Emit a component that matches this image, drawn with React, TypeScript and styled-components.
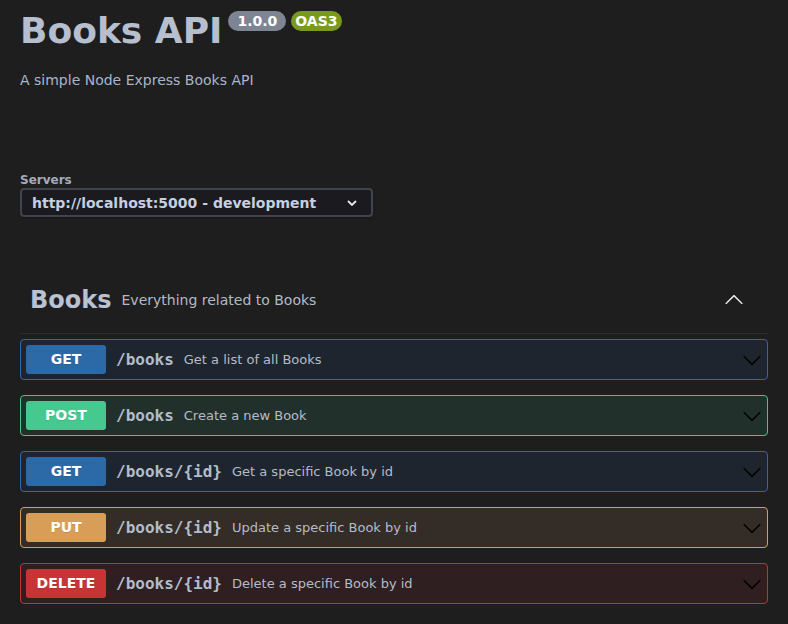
import React from 'react';
import styled, { createGlobalStyle } from 'styled-components';

type Method = 'GET' | 'POST' | 'PUT' | 'DELETE';

const palette: Record<Method, { badge: string; border: string; bg: string }> = {
  GET: { badge: '#2b69a7', border: '#2a6aab', bg: '#1f252e' },
  POST: { badge: '#45c98f', border: '#43c58a', bg: '#22302b' },
  PUT: { badge: '#d89e58', border: '#d49f5a', bg: '#342c26' },
  DELETE: { badge: '#c83336', border: '#bf3235', bg: '#2f1f20' },
};

const ops: { method: Method; path: string; summary: string }[] = [
  { method: 'GET', path: '/books', summary: 'Get a list of all Books' },
  { method: 'POST', path: '/books', summary: 'Create a new Book' },
  { method: 'GET', path: '/books/{id}', summary: 'Get a specific Book by id' },
  { method: 'PUT', path: '/books/{id}', summary: 'Update a specific Book by id' },
  { method: 'DELETE', path: '/books/{id}', summary: 'Delete a specific Book by id' },
];

const GlobalStyle = createGlobalStyle`
  body {
    margin: 0;
    background: #1e1e1e;
    font-family: "DejaVu Sans", sans-serif;
  }
`;

const Page = styled.div`
  padding: 10px 20px 0;
`;

const InfoHeader = styled.div`
  display: flex;
  align-items: flex-start;
`;

const Title = styled.h2`
  margin: 0;
  font-size: 36px;
  line-height: 42px;
  font-weight: 700;
  color: #b6bfcf;
`;

const Stamps = styled.div`
  display: flex;
  gap: 5px;
  margin: 1px 0 0 6px;
`;

const Stamp = styled.span<{ $bg: string; $pad: number }>`
  display: inline-block;
  height: 20px;
  line-height: 20px;
  padding: 0 ${({ $pad }) => $pad}px;
  border-radius: 57px;
  background: ${({ $bg }) => $bg};
  color: #fff;
  font-size: 14px;
  font-weight: 700;
`;

const Description = styled.p`
  margin: 18px 0 0;
  font-size: 14px;
  line-height: 20px;
  color: #a9b6ca;
`;

const Servers = styled.div`
  margin-top: 82px;
`;

const ServersLabel = styled.div`
  font-size: 12px;
  line-height: 16px;
  font-weight: 700;
  color: #a3acbc;
`;

const ServerSelect = styled.div`
  box-sizing: border-box;
  width: 353px;
  height: 29px;
  padding: 0 14px 0 10px;
  display: flex;
  align-items: center;
  justify-content: space-between;
  border: 2px solid #41444e;
  border-radius: 4px;
  background: #1b1b1f;
  box-shadow: 0 1px 2px rgba(0, 0, 0, 0.25);
  font-size: 14px;
  font-weight: 700;
  color: #c6cfdf;
`;

const TagSection = styled.section`
  margin-top: 50px;
`;

const TagHeader = styled.div`
  box-sizing: border-box;
  height: 67px;
  padding: 0 24px 0 10px;
  display: flex;
  align-items: center;
  justify-content: space-between;
  border-bottom: 1px solid #2b2c2f;
`;

const TagTitle = styled.div`
  display: flex;
  align-items: center;
  gap: 10px;
`;

const TagName = styled.span`
  font-size: 24px;
  font-weight: 700;
  color: #b9c1d2;
`;

const TagDesc = styled.span`
  font-size: 14px;
  color: #b3bac6;
`;

const OpList = styled.div`
  margin-top: 5px;
  display: flex;
  flex-direction: column;
  gap: 15px;
`;

const OpBlock = styled.div<{ $method: Method }>`
  display: flex;
  align-items: center;
  padding: 5px;
  border: 1px solid ${({ $method }) => palette[$method].border};
  border-radius: 4px;
  background: ${({ $method }) => palette[$method].bg};
`;

const MethodBadge = styled.span<{ $method: Method }>`
  width: 80px;
  height: 29px;
  line-height: 29px;
  text-align: center;
  border-radius: 3px;
  background: ${({ $method }) => palette[$method].badge};
  color: #fff;
  font-size: 14px;
  font-weight: 700;
  text-shadow: 0 1px 0 rgba(0, 0, 0, 0.1);
`;

const OpPath = styled.span`
  padding: 0 10px;
  font-family: "DejaVu Sans Mono", monospace;
  font-size: 16px;
  font-weight: 700;
  color: #b3bccb;
`;

const OpSummary = styled.span`
  flex: 1;
  font-size: 13px;
  color: #b4bcc9;
`;

const ArrowIcon = styled.svg<{ $up?: boolean; $color: string }>`
  width: 20px;
  height: 20px;
  flex: none;
  fill: ${({ $color }) => $color};
  transform: ${({ $up }) => ($up ? 'rotate(180deg)' : 'none')};
`;

const Arrow = ({ up, color }: { up?: boolean; color: string }) => (
  <ArrowIcon $up={up} $color={color} viewBox="0 0 20 20">
    <path d="M17.418 6.109c.272-.268.709-.268.979 0s.271.701 0 .969l-7.908 7.83c-.27.268-.707.268-.979 0l-7.908-7.830c-.27-.268-.27-.701 0-.969.271-.268.709-.268.979 0L10 13.25l7.418-7.141z" />
  </ArrowIcon>
);

export default function App() {
  return (
    <>
      <GlobalStyle />
      <Page>
        <InfoHeader>
          <Title>Books API</Title>
          <Stamps>
            <Stamp $bg="#7d8492" $pad={9}>1.0.0</Stamp>
            <Stamp $bg="#7a9a1f" $pad={4}>OAS3</Stamp>
          </Stamps>
        </InfoHeader>
        <Description>A simple Node Express Books API</Description>

        <Servers>
          <ServersLabel>Servers</ServersLabel>
          <ServerSelect>
            <span>http://localhost:5000 - development</span>
            <svg width="10" height="6" viewBox="0 0 10 6">
              <polyline points="1,1 5,5 9,1" fill="none" stroke="#e6e8ee" strokeWidth="1.8" />
            </svg>
          </ServerSelect>
        </Servers>

        <TagSection>
          <TagHeader>
            <TagTitle>
              <TagName>Books</TagName>
              <TagDesc>Everything related to Books</TagDesc>
            </TagTitle>
            <Arrow up color="#e8e8e8" />
          </TagHeader>
          <OpList>
            {ops.map((op, i) => (
              <OpBlock key={i} $method={op.method}>
                <MethodBadge $method={op.method}>{op.method}</MethodBadge>
                <OpPath>{op.path}</OpPath>
                <OpSummary>{op.summary}</OpSummary>
                <Arrow color="#000" />
              </OpBlock>
            ))}
          </OpList>
        </TagSection>
      </Page>
    </>
  );
}
